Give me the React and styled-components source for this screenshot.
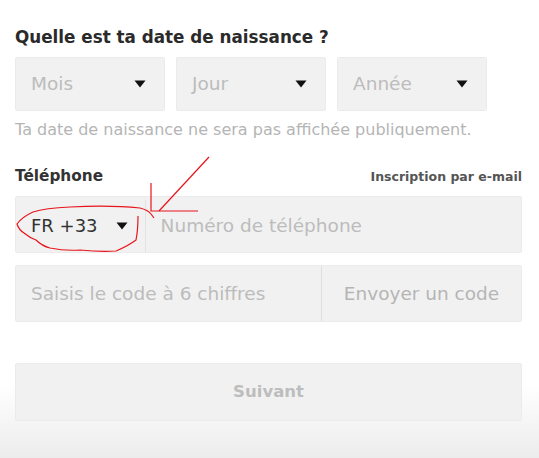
import React from "react";
import styled, { createGlobalStyle } from "styled-components";

const GlobalStyle = createGlobalStyle`
    html, body {
        margin: 0;
        padding: 0;
        background: #ffffff;
    }
    * {
        box-sizing: border-box;
    }
`;

const Page = styled.div`
    position: relative;
    width: 539px;
    height: 458px;
    padding: 26px 17px 0 15px;
    font-family: "DejaVu Sans", "Liberation Sans", Arial, sans-serif;
    background: linear-gradient(
        to bottom,
        #ffffff 0%,
        #ffffff 84%,
        #ececec 100%
    );
    overflow: hidden;
`;

const Title = styled.h2`
    margin: 0;
    font-size: 16.8px;
    line-height: 22px;
    font-weight: 700;
    color: #2a2a2a;
`;

const DateRow = styled.div`
    display: grid;
    grid-template-columns: 150px 150px 150px;
    column-gap: 11px;
    margin-top: 9px;
`;

const Field = styled.div`
    display: flex;
    align-items: center;
    height: ${(p) => p.$h || 54}px;
    line-height: 22px;
    background: #f1f1f1;
    border: 1px solid #ebebeb;
    border-radius: 2px;
`;

const SelectBox = styled(Field)`
    justify-content: space-between;
    padding: 0 18px 0 15px;
`;

const Placeholder = styled.span`
    font-size: 18.5px;
    color: #bcbcbc;
    white-space: nowrap;
`;

const Caret = () => (
    <svg width="12" height="8" viewBox="0 0 12 8">
        <path d="M0.5 0.5 L11.5 0.5 L6 7.5 Z" fill="#111" />
    </svg>
);

const Hint = styled.p`
    margin: 10px 0 0;
    font-size: 16px;
    line-height: 18px;
    color: #b5b5b5;
    white-space: nowrap;
`;

const LabelRow = styled.div`
    display: flex;
    justify-content: space-between;
    align-items: center;
    height: 20px;
    margin-top: 27px;
`;

const Label = styled.span`
    font-size: 15.3px;
    font-weight: 700;
    color: #333;
`;

const SmallLink = styled.span`
    font-size: 12.5px;
    font-weight: 700;
    color: #555;
`;

const PhoneBox = styled(Field)`
    margin-top: 10px;
    padding-top: 3px;
`;

const Country = styled.div`
    display: flex;
    align-items: center;
    gap: 18px;
    height: 100%;
    padding: 0 17px 0 15px;
    border-right: 1px solid #e2e2e2;
    font-size: 18px;
    color: #333;
`;

const PhoneInput = styled.div`
    padding-left: 15px;
`;

const CodeRow = styled(Field)`
    margin-top: 12px;
`;

const CodeInput = styled.div`
    flex: 1;
    display: flex;
    align-items: center;
    height: 100%;
    padding-left: 15px;
    border-right: 1px solid #dedede;
`;

const SendButton = styled.div`
    width: 199px;
    text-align: center;
    font-size: 18.5px;
    color: #b5b5b5;
`;

const NextButton = styled(Field)`
    margin-top: 41px;
    justify-content: center;
    font-size: 16.5px;
    font-weight: 700;
    color: #bdbdbd;
`;

const Annotation = styled.svg`
    position: absolute;
    left: 0;
    top: 0;
    pointer-events: none;
`;

const Scribbles = () => (
    <Annotation width="539" height="458" viewBox="0 0 539 458">
        <g fill="none" stroke="#e8141c" strokeWidth="1.2" strokeLinejoin="round">
            <path d="M154 218 L151 214 Q148 210 140 208 Q110 205 70 207 Q45 208 33 212 Q22 217 17 224 Q19 230 24 233 Q30 238 36 240 Q42 246 50 248 Q65 251 80 250 Q100 252 116 251 Q128 246 136 240 Q138 230 138 216" />
            <path d="M209 157 L159 211" />
            <path d="M151 183 L151 211 L198 211" />
        </g>
    </Annotation>
);

export default function App() {
    return (
        <Page>
            <GlobalStyle />
            <Title>Quelle est ta date de naissance ?</Title>
            <DateRow>
                {["Mois", "Jour", "Année"].map((name) => (
                    <SelectBox key={name}>
                        <Placeholder>{name}</Placeholder>
                        <Caret />
                    </SelectBox>
                ))}
            </DateRow>
            <Hint>Ta date de naissance ne sera pas affichée publiquement.</Hint>
            <LabelRow>
                <Label>Téléphone</Label>
                <SmallLink>Inscription par e-mail</SmallLink>
            </LabelRow>
            <PhoneBox $h={57}>
                <Country>
                    <span>FR +33</span>
                    <Caret />
                </Country>
                <PhoneInput>
                    <Placeholder>Numéro de téléphone</Placeholder>
                </PhoneInput>
            </PhoneBox>
            <CodeRow $h={57}>
                <CodeInput>
                    <Placeholder>Saisis le code à 6 chiffres</Placeholder>
                </CodeInput>
                <SendButton>Envoyer un code</SendButton>
            </CodeRow>
            <NextButton $h={58}>Suivant</NextButton>
            <Scribbles />
        </Page>
    );
}
